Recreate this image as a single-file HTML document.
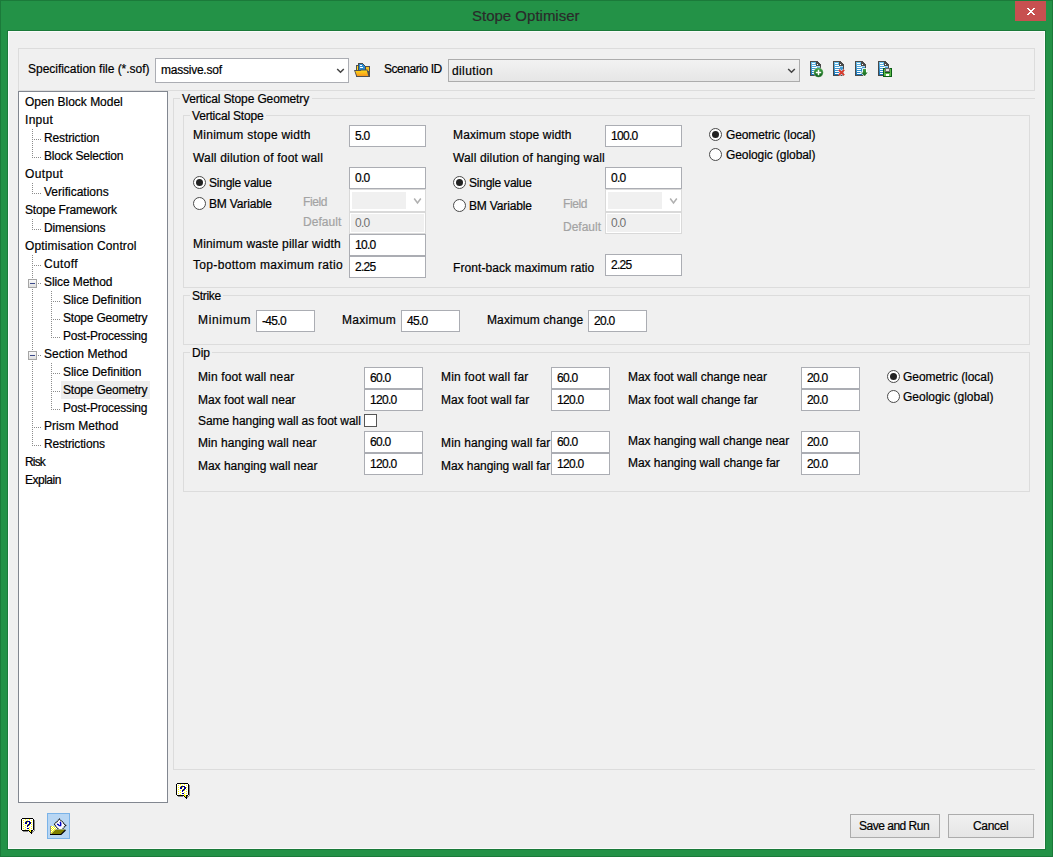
<!DOCTYPE html>
<html><head><meta charset="utf-8"><style>
html,body{margin:0;padding:0;width:1053px;height:857px;overflow:hidden}
body{background:#239247;position:relative;font-family:"Liberation Sans",sans-serif}
.a{position:absolute}
.t{position:absolute;font-size:12px;line-height:14px;white-space:nowrap;color:#000;-webkit-text-stroke:0.2px currentColor}
.g{color:#a3a3a3}
</style></head><body>

<div class="a" style="left:0px;top:0px;width:1053px;height:857px;box-sizing:border-box;border:1px solid #1b7a3a"></div>
<div class="t" style="left:472px;top:7px;font-size:15px;line-height:18px;color:#2a2a2a">Stope Optimiser</div>
<div class="a" style="left:1015px;top:1px;width:31px;height:20px;box-sizing:border-box;background:#c75050"></div>
<svg class="a" style="left:1027px;top:8px" width="8" height="7" viewBox="0 0 8 7" shape-rendering="crispEdges"><path d="M0 0h1v1h-1zM1 0h1v1h-1zM6 0h1v1h-1zM7 0h1v1h-1zM1 1h1v1h-1zM2 1h1v1h-1zM5 1h1v1h-1zM6 1h1v1h-1zM2 2h1v1h-1zM3 2h1v1h-1zM4 2h1v1h-1zM5 2h1v1h-1zM3 3h1v1h-1zM4 3h1v1h-1zM2 4h1v1h-1zM3 4h1v1h-1zM4 4h1v1h-1zM5 4h1v1h-1zM1 5h1v1h-1zM2 5h1v1h-1zM5 5h1v1h-1zM6 5h1v1h-1zM0 6h1v1h-1zM1 6h1v1h-1zM6 6h1v1h-1zM7 6h1v1h-1z" fill="#fff"/></svg>
<div class="a" style="left:7px;top:30px;width:1039px;height:820px;box-sizing:border-box;border:1px solid #1b7a3a"></div>
<div class="a" style="left:8px;top:31px;width:1037px;height:818px;box-sizing:border-box;border:1px solid #fbfbfb;background:#f0f0f0"></div>
<div class="a" style="left:18px;top:48px;width:1017px;height:43px;box-sizing:border-box;border:1px solid #dcdcdc"></div>
<div class="t" style="left:28px;top:62px;letter-spacing:-0.021px;">Specification file (*.sof)</div>
<div class="a" style="left:155px;top:58px;width:194px;height:25px;box-sizing:border-box;border:1px solid #abadb3;background:#fff"></div>
<div class="t" style="left:161px;top:63px;letter-spacing:-0.234px;">massive.sof</div>
<svg class="a" style="left:336px;top:68px" width="9" height="6" viewBox="0 0 9 6"><path d="M1.2 1 L4.5 4.3 L7.8 1" fill="none" stroke="#444" stroke-width="1.5"/></svg>
<svg class="a" style="left:351px;top:59px" width="22" height="22" viewBox="0 0 22 22">
<defs><linearGradient id="fg" x1="0" y1="0" x2="0" y2="1"><stop offset="0" stop-color="#ffd818"/><stop offset="1" stop-color="#f7961c"/></linearGradient></defs>
<g shape-rendering="crispEdges">
<path d="M5 6 h3 v6 h-3z" fill="#505050"/>
<path d="M6 7 h1 v5 h-1z" fill="#ffd21a"/>
<path d="M13 7 h6 v11 h-6z" fill="#505050"/>
<path d="M14 8 h4 v4 h-4z" fill="#f5c020"/>
<path d="M7 4 h5 v1 h1 v1 h1 v1 h1 v5 h-8z" fill="#4a4a4a"/>
<path d="M8 5 h4 v1 h1 v1 h1 v4 h-6z" fill="#2a8ad0"/>
<path d="M9 6 h2 v1 h-2z M9 8 h3 v1 h-3z" fill="#fff"/>
</g>
<path d="M3 11 h6.5 l0.5 -0.5 h6.5 l1.8 7.2 h-13z" fill="#505050"/>
<path d="M4.2 12 h5.6 l0.5 -0.5 h5.5 l1.5 5.6 h-11.2z" fill="url(#fg)"/>
<path d="M5 17 h14 v1 h-14z" fill="#505050" shape-rendering="crispEdges"/>
</svg>
<div class="t" style="left:384px;top:62px;letter-spacing:-0.449px;">Scenario ID</div>
<div class="a" style="left:448px;top:59px;width:352px;height:23px;box-sizing:border-box;border:1px solid #acacac;background:linear-gradient(#f2f2f2,#e6e6e6)"></div>
<div class="t" style="left:452px;top:64px;letter-spacing:0.381px;">dilution</div>
<svg class="a" style="left:787px;top:68px" width="9" height="6" viewBox="0 0 9 6"><path d="M1.2 1 L4.5 4.3 L7.8 1" fill="none" stroke="#444" stroke-width="1.5"/></svg>
<svg class="a" style="left:806px;top:58px" width="22" height="22" viewBox="0 0 22 22"><defs><linearGradient id="b1" x1="0" y1="0" x2="0" y2="1"><stop offset="0" stop-color="#6cc0ec"/><stop offset="1" stop-color="#1272b8"/></linearGradient><linearGradient id="gr1" x1="0" y1="0" x2="0" y2="1"><stop offset="0" stop-color="#46a646"/><stop offset="1" stop-color="#0a5a14"/></linearGradient></defs><g shape-rendering="crispEdges"><path d="M4 3 h7 l4 4 v11 h-11z" fill="#4a4a4a"/><path d="M5 4 h5 v4 h4 v9 h-9z" fill="url(#b1)"/><path d="M10 8 h4 v1 h-4z" fill="#a8d8f4"/><path d="M6 5 h3 v1 h-3z M6 7 h4 v1 h-4z M6 9 h5 v1 h-5z M6 11 h4 v1 h-4z M6 13 h4 v1 h-4z M6 15 h4 v1 h-4z" fill="#fff"/><path d="M11 6 h1 v1 h-1z" fill="#fff"/></g><circle cx="12.5" cy="14.5" r="4.8" fill="url(#gr1)" stroke="#fff" stroke-opacity="0.6" stroke-width="0.6"/><path d="M12.5 11.8 v5.4 M9.8 14.5 h5.4" stroke="#fff" stroke-width="1.5"/></svg>
<svg class="a" style="left:829px;top:58px" width="22" height="22" viewBox="0 0 22 22"><defs><linearGradient id="b2" x1="0" y1="0" x2="0" y2="1"><stop offset="0" stop-color="#6cc0ec"/><stop offset="1" stop-color="#1272b8"/></linearGradient><linearGradient id="gr2" x1="0" y1="0" x2="0" y2="1"><stop offset="0" stop-color="#46a646"/><stop offset="1" stop-color="#0a5a14"/></linearGradient></defs><g shape-rendering="crispEdges"><path d="M4 3 h7 l4 4 v11 h-11z" fill="#4a4a4a"/><path d="M5 4 h5 v4 h4 v9 h-9z" fill="url(#b2)"/><path d="M10 8 h4 v1 h-4z" fill="#a8d8f4"/><path d="M6 5 h3 v1 h-3z M6 7 h4 v1 h-4z M6 9 h5 v1 h-5z M6 11 h4 v1 h-4z M6 13 h4 v1 h-4z M6 15 h4 v1 h-4z" fill="#fff"/><path d="M11 6 h1 v1 h-1z" fill="#fff"/></g><path d="M9.8 11.8 L15.2 17.2 M15.2 11.8 L9.8 17.2" stroke="#fff" stroke-width="3.2" stroke-opacity="0.7"/><path d="M9.8 11.8 L15.2 17.2 M15.2 11.8 L9.8 17.2" stroke="#d8382a" stroke-width="1.9"/></svg>
<svg class="a" style="left:851px;top:58px" width="22" height="22" viewBox="0 0 22 22"><defs><linearGradient id="b3" x1="0" y1="0" x2="0" y2="1"><stop offset="0" stop-color="#6cc0ec"/><stop offset="1" stop-color="#1272b8"/></linearGradient><linearGradient id="gr3" x1="0" y1="0" x2="0" y2="1"><stop offset="0" stop-color="#46a646"/><stop offset="1" stop-color="#0a5a14"/></linearGradient></defs><g shape-rendering="crispEdges"><path d="M4 3 h7 l4 4 v11 h-11z" fill="#4a4a4a"/><path d="M5 4 h5 v4 h4 v9 h-9z" fill="url(#b3)"/><path d="M10 8 h4 v1 h-4z" fill="#a8d8f4"/><path d="M6 5 h3 v1 h-3z M6 7 h4 v1 h-4z M6 9 h5 v1 h-5z M6 11 h4 v1 h-4z M6 13 h4 v1 h-4z M6 15 h4 v1 h-4z" fill="#fff"/><path d="M11 6 h1 v1 h-1z" fill="#fff"/></g><path d="M11.5 10.5 h4 v3.5 h2 l-4 4.5 l-4 -4.5 h2z" fill="#fff" stroke="#fff" stroke-width="1" stroke-opacity="0.7"/><path d="M12 11 h3 v3.5 h1.8 l-3.3 3.6 l-3.3 -3.6 h1.8z" fill="url(#gr3)"/></svg>
<svg class="a" style="left:874px;top:58px" width="22" height="22" viewBox="0 0 22 22"><defs><linearGradient id="b4" x1="0" y1="0" x2="0" y2="1"><stop offset="0" stop-color="#6cc0ec"/><stop offset="1" stop-color="#1272b8"/></linearGradient><linearGradient id="gr4" x1="0" y1="0" x2="0" y2="1"><stop offset="0" stop-color="#46a646"/><stop offset="1" stop-color="#0a5a14"/></linearGradient></defs><g shape-rendering="crispEdges"><path d="M4 3 h7 l4 4 v11 h-11z" fill="#4a4a4a"/><path d="M5 4 h5 v4 h4 v9 h-9z" fill="url(#b4)"/><path d="M10 8 h4 v1 h-4z" fill="#a8d8f4"/><path d="M6 5 h3 v1 h-3z M6 7 h4 v1 h-4z M6 9 h5 v1 h-5z M6 11 h4 v1 h-4z M6 13 h4 v1 h-4z M6 15 h4 v1 h-4z" fill="#fff"/><path d="M11 6 h1 v1 h-1z" fill="#fff"/></g><g shape-rendering="crispEdges"><path d="M9 10 h8 l1 1 v8 h-9z" fill="#0b5e16"/><path d="M10 11 h7 v7 h-7z" fill="#5cb848"/><path d="M11 10 h5 v4 h-5z" fill="#6a6a6a"/><path d="M12 11 h3 v2 h-3z" fill="#e4e4e4"/><path d="M11 14 h5 v1 h-5z" fill="#0b5e16"/><path d="M12 16 h3 v2 h-3z" fill="#fff"/></g></svg>
<div class="a" style="left:18px;top:91px;width:150px;height:712px;box-sizing:border-box;border:1px solid #828790;background:#fff"></div>
<div class="a" style="left:61px;top:381px;width:89px;height:18px;box-sizing:border-box;background:#ededed"></div>
<div class="a" style="left:32px;top:129px;width:1px;height:29px;background:repeating-linear-gradient(#8c8c8c 0 1px,transparent 1px 2px)"></div>
<div class="a" style="left:34px;top:139px;width:7px;height:1px;background:repeating-linear-gradient(90deg,#8c8c8c 0 1px,transparent 1px 2px)"></div>
<div class="a" style="left:34px;top:157px;width:7px;height:1px;background:repeating-linear-gradient(90deg,#8c8c8c 0 1px,transparent 1px 2px)"></div>
<div class="a" style="left:32px;top:183px;width:1px;height:11px;background:repeating-linear-gradient(#8c8c8c 0 1px,transparent 1px 2px)"></div>
<div class="a" style="left:34px;top:193px;width:7px;height:1px;background:repeating-linear-gradient(90deg,#8c8c8c 0 1px,transparent 1px 2px)"></div>
<div class="a" style="left:32px;top:219px;width:1px;height:11px;background:repeating-linear-gradient(#8c8c8c 0 1px,transparent 1px 2px)"></div>
<div class="a" style="left:34px;top:229px;width:7px;height:1px;background:repeating-linear-gradient(90deg,#8c8c8c 0 1px,transparent 1px 2px)"></div>
<div class="a" style="left:32px;top:255px;width:1px;height:191px;background:repeating-linear-gradient(#8c8c8c 0 1px,transparent 1px 2px)"></div>
<div class="a" style="left:34px;top:265px;width:7px;height:1px;background:repeating-linear-gradient(90deg,#8c8c8c 0 1px,transparent 1px 2px)"></div>
<div class="a" style="left:34px;top:427px;width:7px;height:1px;background:repeating-linear-gradient(90deg,#8c8c8c 0 1px,transparent 1px 2px)"></div>
<div class="a" style="left:34px;top:445px;width:7px;height:1px;background:repeating-linear-gradient(90deg,#8c8c8c 0 1px,transparent 1px 2px)"></div>
<div class="a" style="left:38px;top:283px;width:3px;height:1px;background:repeating-linear-gradient(90deg,#8c8c8c 0 1px,transparent 1px 2px)"></div>
<div class="a" style="left:38px;top:355px;width:3px;height:1px;background:repeating-linear-gradient(90deg,#8c8c8c 0 1px,transparent 1px 2px)"></div>
<div class="a" style="left:51px;top:291px;width:1px;height:47px;background:repeating-linear-gradient(#8c8c8c 0 1px,transparent 1px 2px)"></div>
<div class="a" style="left:51px;top:363px;width:1px;height:47px;background:repeating-linear-gradient(#8c8c8c 0 1px,transparent 1px 2px)"></div>
<div class="a" style="left:53px;top:301px;width:7px;height:1px;background:repeating-linear-gradient(90deg,#8c8c8c 0 1px,transparent 1px 2px)"></div>
<div class="a" style="left:53px;top:319px;width:7px;height:1px;background:repeating-linear-gradient(90deg,#8c8c8c 0 1px,transparent 1px 2px)"></div>
<div class="a" style="left:53px;top:337px;width:7px;height:1px;background:repeating-linear-gradient(90deg,#8c8c8c 0 1px,transparent 1px 2px)"></div>
<div class="a" style="left:53px;top:373px;width:7px;height:1px;background:repeating-linear-gradient(90deg,#8c8c8c 0 1px,transparent 1px 2px)"></div>
<div class="a" style="left:53px;top:391px;width:7px;height:1px;background:repeating-linear-gradient(90deg,#8c8c8c 0 1px,transparent 1px 2px)"></div>
<div class="a" style="left:53px;top:409px;width:7px;height:1px;background:repeating-linear-gradient(90deg,#8c8c8c 0 1px,transparent 1px 2px)"></div>
<div class="a" style="left:28px;top:279px;width:9px;height:9px;box-sizing:border-box;border:1px solid #a5a5a5;background:linear-gradient(#fafafa,#dedede)"></div>
<div class="a" style="left:30px;top:283px;width:5px;height:1px;background:#3b4a8a"></div>
<div class="a" style="left:28px;top:351px;width:9px;height:9px;box-sizing:border-box;border:1px solid #a5a5a5;background:linear-gradient(#fafafa,#dedede)"></div>
<div class="a" style="left:30px;top:355px;width:5px;height:1px;background:#3b4a8a"></div>
<div class="t" style="left:25px;top:95px;letter-spacing:-0.022px;">Open Block Model</div>
<div class="t" style="left:25px;top:113px;letter-spacing:0.307px;">Input</div>
<div class="t" style="left:44px;top:131px;letter-spacing:-0.119px;">Restriction</div>
<div class="t" style="left:44px;top:149px;letter-spacing:-0.188px;">Block Selection</div>
<div class="t" style="left:25px;top:167px;letter-spacing:0.380px;">Output</div>
<div class="t" style="left:44px;top:185px;letter-spacing:-0.000px;">Verifications</div>
<div class="t" style="left:25px;top:203px;letter-spacing:-0.192px;">Stope Framework</div>
<div class="t" style="left:44px;top:221px;letter-spacing:-0.123px;">Dimensions</div>
<div class="t" style="left:25px;top:239px;letter-spacing:0.147px;">Optimisation Control</div>
<div class="t" style="left:44px;top:257px;letter-spacing:0.344px;">Cutoff</div>
<div class="t" style="left:44px;top:275px;letter-spacing:-0.087px;">Slice Method</div>
<div class="t" style="left:63px;top:293px;letter-spacing:-0.065px;">Slice Definition</div>
<div class="t" style="left:63px;top:311px;letter-spacing:-0.219px;">Stope Geometry</div>
<div class="t" style="left:63px;top:329px;letter-spacing:-0.204px;">Post-Processing</div>
<div class="t" style="left:44px;top:347px;letter-spacing:0.003px;">Section Method</div>
<div class="t" style="left:63px;top:365px;letter-spacing:-0.065px;">Slice Definition</div>
<div class="t" style="left:63px;top:383px;letter-spacing:-0.219px;">Stope Geometry</div>
<div class="t" style="left:63px;top:401px;letter-spacing:-0.204px;">Post-Processing</div>
<div class="t" style="left:44px;top:419px;letter-spacing:0.035px;">Prism Method</div>
<div class="t" style="left:44px;top:437px;letter-spacing:-0.162px;">Restrictions</div>
<div class="t" style="left:25px;top:455px;letter-spacing:-0.848px;">Risk</div>
<div class="t" style="left:25px;top:473px;letter-spacing:-0.493px;">Explain</div>
<div class="a" style="left:173px;top:98px;width:7px;height:1px;background:#dcdcdc"></div>
<div class="a" style="left:312px;top:98px;width:723px;height:1px;background:#dcdcdc"></div>
<div class="a" style="left:173px;top:98px;width:1px;height:672px;background:#dcdcdc"></div>
<div class="a" style="left:173px;top:769px;width:862px;height:1px;background:#dcdcdc"></div>
<div class="t" style="left:182px;top:92px;letter-spacing:-0.133px;">Vertical Stope Geometry</div>
<div class="a" style="left:183px;top:115px;width:7px;height:1px;background:#dcdcdc"></div>
<div class="a" style="left:266px;top:115px;width:764px;height:1px;background:#dcdcdc"></div>
<div class="a" style="left:183px;top:115px;width:1px;height:173px;background:#dcdcdc"></div>
<div class="a" style="left:1029px;top:115px;width:1px;height:173px;background:#dcdcdc"></div>
<div class="a" style="left:183px;top:287px;width:847px;height:1px;background:#dcdcdc"></div>
<div class="t" style="left:192px;top:109px;letter-spacing:-0.187px;">Vertical Stope</div>
<div class="t" style="left:193px;top:128px;letter-spacing:0.266px;">Minimum stope width</div>
<div class="a" style="left:349px;top:125px;width:77px;height:22px;box-sizing:border-box;border:1px solid #abadb3;background:#fff"></div>
<div class="t" style="left:355px;top:129px;letter-spacing:-0.7px;">5.0</div>
<div class="t" style="left:193px;top:151px;letter-spacing:0.198px;">Wall dilution of foot wall</div>
<div class="a" style="left:349px;top:167px;width:77px;height:22px;box-sizing:border-box;border:1px solid #abadb3;background:#fff"></div>
<div class="t" style="left:355px;top:171px;letter-spacing:-0.7px;">0.0</div>
<svg class="a" style="left:193px;top:176px" width="13" height="13" viewBox="0 0 13 13"><circle cx="6.5" cy="6.5" r="6" fill="#fff" stroke="#4a4a4a" stroke-width="1"/><circle cx="6.5" cy="6.5" r="3.5" fill="#222"/></svg>
<div class="t" style="left:209px;top:176px;letter-spacing:-0.225px;">Single value</div>
<svg class="a" style="left:193px;top:197px" width="13" height="13" viewBox="0 0 13 13"><circle cx="6.5" cy="6.5" r="6" fill="#fff" stroke="#4a4a4a" stroke-width="1"/></svg>
<div class="t" style="left:209px;top:197px;letter-spacing:-0.157px;">BM Variable</div>
<div class="t g" style="left:303px;top:195px;letter-spacing:-0.379px;">Field</div>
<div class="a" style="left:349px;top:189px;width:77px;height:23px;box-sizing:border-box;border:1px solid #d9d9d9;background:#fff"></div>
<div class="a" style="left:352px;top:192px;width:54px;height:17px;box-sizing:border-box;background:#f0f0f0"></div>
<svg class="a" style="left:413px;top:197px" width="9" height="8" viewBox="0 0 9 8"><path d="M1.2 1.5 L4.5 6 L7.8 1.5" fill="none" stroke="#b0b0b0" stroke-width="1.5"/></svg>
<div class="t g" style="left:303px;top:215px;letter-spacing:0.047px;">Default</div>
<div class="a" style="left:349px;top:212px;width:77px;height:22px;box-sizing:border-box;border:1px solid #d9d9d9;background:#f0f0f0;box-shadow:inset 0 0 0 1px #fff"></div>
<div class="t" style="left:355px;top:216px;letter-spacing:-0.7px;color:#707070;-webkit-text-stroke:0;">0.0</div>
<div class="t" style="left:193px;top:237px;letter-spacing:0.172px;">Minimum waste pillar width</div>
<div class="a" style="left:349px;top:234px;width:77px;height:22px;box-sizing:border-box;border:1px solid #abadb3;background:#fff"></div>
<div class="t" style="left:355px;top:238px;letter-spacing:-0.7px;">10.0</div>
<div class="t" style="left:193px;top:258px;letter-spacing:0.333px;">Top-bottom maximum ratio</div>
<div class="a" style="left:349px;top:256px;width:77px;height:22px;box-sizing:border-box;border:1px solid #abadb3;background:#fff"></div>
<div class="t" style="left:355px;top:260px;letter-spacing:-0.7px;">2.25</div>
<div class="t" style="left:453px;top:128px;letter-spacing:0.132px;">Maximum stope width</div>
<div class="a" style="left:605px;top:125px;width:77px;height:22px;box-sizing:border-box;border:1px solid #abadb3;background:#fff"></div>
<div class="t" style="left:611px;top:129px;letter-spacing:-0.7px;">100.0</div>
<div class="t" style="left:453px;top:151px;letter-spacing:0.145px;">Wall dilution of hanging wall</div>
<div class="a" style="left:605px;top:167px;width:77px;height:22px;box-sizing:border-box;border:1px solid #abadb3;background:#fff"></div>
<div class="t" style="left:611px;top:171px;letter-spacing:-0.7px;">0.0</div>
<svg class="a" style="left:453px;top:176px" width="13" height="13" viewBox="0 0 13 13"><circle cx="6.5" cy="6.5" r="6" fill="#fff" stroke="#4a4a4a" stroke-width="1"/><circle cx="6.5" cy="6.5" r="3.5" fill="#222"/></svg>
<div class="t" style="left:469px;top:176px;letter-spacing:-0.225px;">Single value</div>
<svg class="a" style="left:453px;top:199px" width="13" height="13" viewBox="0 0 13 13"><circle cx="6.5" cy="6.5" r="6" fill="#fff" stroke="#4a4a4a" stroke-width="1"/></svg>
<div class="t" style="left:469px;top:199px;letter-spacing:-0.157px;">BM Variable</div>
<div class="t g" style="left:563px;top:197px;letter-spacing:-0.404px;">Field</div>
<div class="a" style="left:605px;top:189px;width:77px;height:23px;box-sizing:border-box;border:1px solid #d9d9d9;background:#fff"></div>
<div class="a" style="left:608px;top:192px;width:54px;height:17px;box-sizing:border-box;background:#f0f0f0"></div>
<svg class="a" style="left:669px;top:197px" width="9" height="8" viewBox="0 0 9 8"><path d="M1.2 1.5 L4.5 6 L7.8 1.5" fill="none" stroke="#b0b0b0" stroke-width="1.5"/></svg>
<div class="t g" style="left:563px;top:220px;letter-spacing:-0.003px;">Default</div>
<div class="a" style="left:605px;top:212px;width:77px;height:22px;box-sizing:border-box;border:1px solid #d9d9d9;background:#f0f0f0;box-shadow:inset 0 0 0 1px #fff"></div>
<div class="t" style="left:611px;top:216px;letter-spacing:-0.7px;color:#707070;-webkit-text-stroke:0;">0.0</div>
<div class="t" style="left:453px;top:261px;letter-spacing:0.084px;">Front-back maximum ratio</div>
<div class="a" style="left:605px;top:254px;width:77px;height:22px;box-sizing:border-box;border:1px solid #abadb3;background:#fff"></div>
<div class="t" style="left:611px;top:258px;letter-spacing:-0.7px;">2.25</div>
<svg class="a" style="left:709px;top:128px" width="13" height="13" viewBox="0 0 13 13"><circle cx="6.5" cy="6.5" r="6" fill="#fff" stroke="#4a4a4a" stroke-width="1"/><circle cx="6.5" cy="6.5" r="3.5" fill="#222"/></svg>
<div class="t" style="left:726px;top:128px;letter-spacing:-0.122px;">Geometric (local)</div>
<svg class="a" style="left:709px;top:148px" width="13" height="13" viewBox="0 0 13 13"><circle cx="6.5" cy="6.5" r="6" fill="#fff" stroke="#4a4a4a" stroke-width="1"/></svg>
<div class="t" style="left:726px;top:148px;letter-spacing:-0.082px;">Geologic (global)</div>
<div class="a" style="left:183px;top:295px;width:7px;height:1px;background:#dcdcdc"></div>
<div class="a" style="left:223px;top:295px;width:807px;height:1px;background:#dcdcdc"></div>
<div class="a" style="left:183px;top:295px;width:1px;height:50px;background:#dcdcdc"></div>
<div class="a" style="left:1029px;top:295px;width:1px;height:50px;background:#dcdcdc"></div>
<div class="a" style="left:183px;top:344px;width:847px;height:1px;background:#dcdcdc"></div>
<div class="t" style="left:192px;top:289px;letter-spacing:-0.294px;">Strike</div>
<div class="t" style="left:198px;top:313px;letter-spacing:0.635px;">Minimum</div>
<div class="a" style="left:256px;top:310px;width:59px;height:22px;box-sizing:border-box;border:1px solid #abadb3;background:#fff"></div>
<div class="t" style="left:262px;top:314px;letter-spacing:-0.7px;">-45.0</div>
<div class="t" style="left:342px;top:313px;letter-spacing:0.281px;">Maximum</div>
<div class="a" style="left:401px;top:310px;width:59px;height:22px;box-sizing:border-box;border:1px solid #abadb3;background:#fff"></div>
<div class="t" style="left:407px;top:314px;letter-spacing:-0.7px;">45.0</div>
<div class="t" style="left:487px;top:313px;letter-spacing:0.115px;">Maximum change</div>
<div class="a" style="left:588px;top:310px;width:59px;height:22px;box-sizing:border-box;border:1px solid #abadb3;background:#fff"></div>
<div class="t" style="left:594px;top:314px;letter-spacing:-0.7px;">20.0</div>
<div class="a" style="left:183px;top:352px;width:7px;height:1px;background:#dcdcdc"></div>
<div class="a" style="left:212px;top:352px;width:818px;height:1px;background:#dcdcdc"></div>
<div class="a" style="left:183px;top:352px;width:1px;height:140px;background:#dcdcdc"></div>
<div class="a" style="left:1029px;top:352px;width:1px;height:140px;background:#dcdcdc"></div>
<div class="a" style="left:183px;top:491px;width:847px;height:1px;background:#dcdcdc"></div>
<div class="t" style="left:192px;top:346px;letter-spacing:-0.008px;">Dip</div>
<div class="t" style="left:198px;top:370px;letter-spacing:0.128px;">Min foot wall near</div>
<div class="t" style="left:198px;top:393px;letter-spacing:0.014px;">Max foot wall near</div>
<div class="t" style="left:198px;top:414px;letter-spacing:-0.067px;">Same hanging wall as foot wall</div>
<div class="t" style="left:198px;top:436px;letter-spacing:0.093px;">Min hanging wall near</div>
<div class="t" style="left:198px;top:459px;letter-spacing:-0.028px;">Max hanging wall near</div>
<div class="a" style="left:364px;top:367px;width:59px;height:22px;box-sizing:border-box;border:1px solid #abadb3;background:#fff"></div>
<div class="t" style="left:370px;top:371px;letter-spacing:-0.7px;">60.0</div>
<div class="a" style="left:364px;top:389px;width:59px;height:22px;box-sizing:border-box;border:1px solid #abadb3;background:#fff"></div>
<div class="t" style="left:370px;top:393px;letter-spacing:-0.7px;">120.0</div>
<div class="a" style="left:364px;top:414px;width:13px;height:13px;box-sizing:border-box;border:1px solid #555;background:#fff"></div>
<div class="a" style="left:364px;top:431px;width:59px;height:22px;box-sizing:border-box;border:1px solid #abadb3;background:#fff"></div>
<div class="t" style="left:370px;top:435px;letter-spacing:-0.7px;">60.0</div>
<div class="a" style="left:364px;top:453px;width:59px;height:22px;box-sizing:border-box;border:1px solid #abadb3;background:#fff"></div>
<div class="t" style="left:370px;top:457px;letter-spacing:-0.7px;">120.0</div>
<div class="t" style="left:441px;top:370px;letter-spacing:0.205px;">Min foot wall far</div>
<div class="t" style="left:441px;top:393px;letter-spacing:0.054px;">Max foot wall far</div>
<div class="t" style="left:441px;top:436px;letter-spacing:0.131px;">Min hanging wall far</div>
<div class="t" style="left:441px;top:459px;letter-spacing:-0.045px;">Max hanging wall far</div>
<div class="a" style="left:551px;top:367px;width:59px;height:22px;box-sizing:border-box;border:1px solid #abadb3;background:#fff"></div>
<div class="t" style="left:557px;top:371px;letter-spacing:-0.7px;">60.0</div>
<div class="a" style="left:551px;top:389px;width:59px;height:22px;box-sizing:border-box;border:1px solid #abadb3;background:#fff"></div>
<div class="t" style="left:557px;top:393px;letter-spacing:-0.7px;">120.0</div>
<div class="a" style="left:551px;top:431px;width:59px;height:22px;box-sizing:border-box;border:1px solid #abadb3;background:#fff"></div>
<div class="t" style="left:557px;top:435px;letter-spacing:-0.7px;">60.0</div>
<div class="a" style="left:551px;top:453px;width:59px;height:22px;box-sizing:border-box;border:1px solid #abadb3;background:#fff"></div>
<div class="t" style="left:557px;top:457px;letter-spacing:-0.7px;">120.0</div>
<div class="t" style="left:628px;top:370px;letter-spacing:-0.048px;">Max foot wall change near</div>
<div class="t" style="left:628px;top:393px;letter-spacing:-0.010px;">Max foot wall change far</div>
<div class="t" style="left:628px;top:434px;letter-spacing:-0.057px;">Max hanging wall change near</div>
<div class="t" style="left:628px;top:456px;letter-spacing:-0.036px;">Max hanging wall change far</div>
<div class="a" style="left:801px;top:367px;width:59px;height:22px;box-sizing:border-box;border:1px solid #abadb3;background:#fff"></div>
<div class="t" style="left:807px;top:371px;letter-spacing:-0.7px;">20.0</div>
<div class="a" style="left:801px;top:389px;width:59px;height:22px;box-sizing:border-box;border:1px solid #abadb3;background:#fff"></div>
<div class="t" style="left:807px;top:393px;letter-spacing:-0.7px;">20.0</div>
<div class="a" style="left:801px;top:431px;width:59px;height:22px;box-sizing:border-box;border:1px solid #abadb3;background:#fff"></div>
<div class="t" style="left:807px;top:435px;letter-spacing:-0.7px;">20.0</div>
<div class="a" style="left:801px;top:453px;width:59px;height:22px;box-sizing:border-box;border:1px solid #abadb3;background:#fff"></div>
<div class="t" style="left:807px;top:457px;letter-spacing:-0.7px;">20.0</div>
<svg class="a" style="left:887px;top:370px" width="13" height="13" viewBox="0 0 13 13"><circle cx="6.5" cy="6.5" r="6" fill="#fff" stroke="#4a4a4a" stroke-width="1"/><circle cx="6.5" cy="6.5" r="3.5" fill="#222"/></svg>
<div class="t" style="left:903px;top:370px;letter-spacing:-0.054px;">Geometric (local)</div>
<svg class="a" style="left:887px;top:390px" width="13" height="13" viewBox="0 0 13 13"><circle cx="6.5" cy="6.5" r="6" fill="#fff" stroke="#4a4a4a" stroke-width="1"/></svg>
<div class="t" style="left:903px;top:390px;letter-spacing:-0.014px;">Geologic (global)</div>
<svg class="a" style="left:172px;top:780px" width="22" height="22" viewBox="0 0 22 22" shape-rendering="crispEdges"><path d="M5 4 h11 v11 h-11z" fill="#fff"/><path d="M5 3 h11 v1 h-11z M4 4 h1 v11 h-1z M16 4 h1 v11 h-1z M5 15 h7 v1 h-7z M14 15 h2 v1 h-2z M12 16 h1 v1 h-1z M14 16 h1 v1 h-1z M13 17 h2 v1 h-2z M14 18 h1 v1 h-1z" fill="#000"/><path d="M12 15 h2 v1 h-2z M13 16 h1 v1 h-1z" fill="#ffff00"/><path d="M17 5 h1 v11 h-1z M6 16 h5 v1 h-5z M15 16 h2 v1 h-2z M15 17 h1 v1 h-1z" fill="#888"/><path d="M6 5 h1 v1 h-1z M6 7 h1 v1 h-1z M6 9 h1 v1 h-1z M6 11 h1 v1 h-1z M6 13 h1 v1 h-1z M8 4 h1 v1 h-1z M8 6 h1 v1 h-1z M8 8 h1 v1 h-1z M8 10 h1 v1 h-1z M8 12 h1 v1 h-1z M8 14 h1 v1 h-1z M10 5 h1 v1 h-1z M10 7 h1 v1 h-1z M10 9 h1 v1 h-1z M10 11 h1 v1 h-1z M10 13 h1 v1 h-1z M12 4 h1 v1 h-1z M12 6 h1 v1 h-1z M12 8 h1 v1 h-1z M12 10 h1 v1 h-1z M12 12 h1 v1 h-1z M12 14 h1 v1 h-1z M14 5 h1 v1 h-1z M14 7 h1 v1 h-1z M14 9 h1 v1 h-1z M14 11 h1 v1 h-1z M14 13 h1 v1 h-1z " fill="#ffff00"/><path d="M9 6 h4 v1 h-4z M8 7 h2 v2 h-2z M12 7 h2 v2 h-2z M11 9 h2 v1 h-2z M10 10 h2 v1 h-2z M10 11 h1 v1 h-1z M10 13 h2 v1 h-2z" fill="#000080"/></svg>
<svg class="a" style="left:17px;top:815px" width="22" height="22" viewBox="0 0 22 22" shape-rendering="crispEdges"><path d="M5 4 h11 v11 h-11z" fill="#fff"/><path d="M5 3 h11 v1 h-11z M4 4 h1 v11 h-1z M16 4 h1 v11 h-1z M5 15 h7 v1 h-7z M14 15 h2 v1 h-2z M12 16 h1 v1 h-1z M14 16 h1 v1 h-1z M13 17 h2 v1 h-2z M14 18 h1 v1 h-1z" fill="#000"/><path d="M12 15 h2 v1 h-2z M13 16 h1 v1 h-1z" fill="#ffff00"/><path d="M17 5 h1 v11 h-1z M6 16 h5 v1 h-5z M15 16 h2 v1 h-2z M15 17 h1 v1 h-1z" fill="#888"/><path d="M6 5 h1 v1 h-1z M6 7 h1 v1 h-1z M6 9 h1 v1 h-1z M6 11 h1 v1 h-1z M6 13 h1 v1 h-1z M8 4 h1 v1 h-1z M8 6 h1 v1 h-1z M8 8 h1 v1 h-1z M8 10 h1 v1 h-1z M8 12 h1 v1 h-1z M8 14 h1 v1 h-1z M10 5 h1 v1 h-1z M10 7 h1 v1 h-1z M10 9 h1 v1 h-1z M10 11 h1 v1 h-1z M10 13 h1 v1 h-1z M12 4 h1 v1 h-1z M12 6 h1 v1 h-1z M12 8 h1 v1 h-1z M12 10 h1 v1 h-1z M12 12 h1 v1 h-1z M12 14 h1 v1 h-1z M14 5 h1 v1 h-1z M14 7 h1 v1 h-1z M14 9 h1 v1 h-1z M14 11 h1 v1 h-1z M14 13 h1 v1 h-1z " fill="#ffff00"/><path d="M9 6 h4 v1 h-4z M8 7 h2 v2 h-2z M12 7 h2 v2 h-2z M11 9 h2 v1 h-2z M10 10 h2 v1 h-2z M10 11 h1 v1 h-1z M10 13 h2 v1 h-2z" fill="#000080"/></svg>
<div class="a" style="left:47px;top:813px;width:23px;height:26px;box-sizing:border-box;border:1px solid #7ab3e8;background:#b8d6f3"></div>
<svg class="a" style="left:46px;top:812px" width="26" height="28" viewBox="0 0 26 28">
<path d="M8.3 12.4 L13.4 7 L19.8 13.4 L16.3 17 L12.3 17z" fill="#fff"/>
<path d="M8.3 12.4 L13.4 7 L19.8 13.4 L16.3 17 M12.3 17 L8.3 12.4" fill="none" stroke="#000" stroke-width="1.1" stroke-dasharray="1.2 0.6"/>
<path d="M14.2 9.8 L14.8 11.8 L14.6 13.6 L13.2 13.6 L12.3 12.6 L11 12.2" fill="none" stroke="#0000c8" stroke-width="1.4"/>
<path d="M5 14h1v1h-1zM7 14h1v1h-1zM6 15h1v1h-1zM8 15h1v1h-1zM5 16h1v1h-1zM7 16h1v1h-1zM9 16h1v1h-1zM6 17h1v1h-1zM8 17h1v1h-1zM5 18h1v1h-1zM7 18h1v1h-1zM6 19h1v1h-1zM5 20h1v1h-1z" fill="#ffff00" shape-rendering="crispEdges"/>
<path d="M6 14h1v1h-1zM5 15h1v1h-1zM7 15h1v1h-1zM9 15h1v1h-1zM6 16h1v1h-1zM8 16h1v1h-1zM10 16h1v1h-1zM5 17h1v1h-1zM7 17h1v1h-1zM9 17h1v1h-1zM6 18h1v1h-1zM8 18h1v1h-1zM5 19h1v1h-1zM7 19h1v1h-1zM6 20h1v1h-1zM5 21h1v1h-1z" fill="#fff" shape-rendering="crispEdges"/>
<path d="M4 13.5 h1 v8.5 h-1z" fill="#8a8a8a" shape-rendering="crispEdges"/>
<path d="M5 22 L9.5 17.5 h10 l-4.5 4.5z" fill="#808000"/>
<path d="M4 22.5 h11 l4.5 -4.5" fill="none" stroke="#000" stroke-width="1.2"/>
</svg>
<div class="a" style="left:850px;top:814px;width:90px;height:24px;box-sizing:border-box;border:1px solid #acacac;background:linear-gradient(#f0f0f0,#e5e5e5)"></div>
<div class="t" style="left:859px;top:819px;letter-spacing:-0.494px;">Save and Run</div>
<div class="a" style="left:948px;top:814px;width:86px;height:24px;box-sizing:border-box;border:1px solid #acacac;background:linear-gradient(#f0f0f0,#e5e5e5)"></div>
<div class="t" style="left:973px;top:819px;letter-spacing:-0.332px;">Cancel</div>
</body></html>
